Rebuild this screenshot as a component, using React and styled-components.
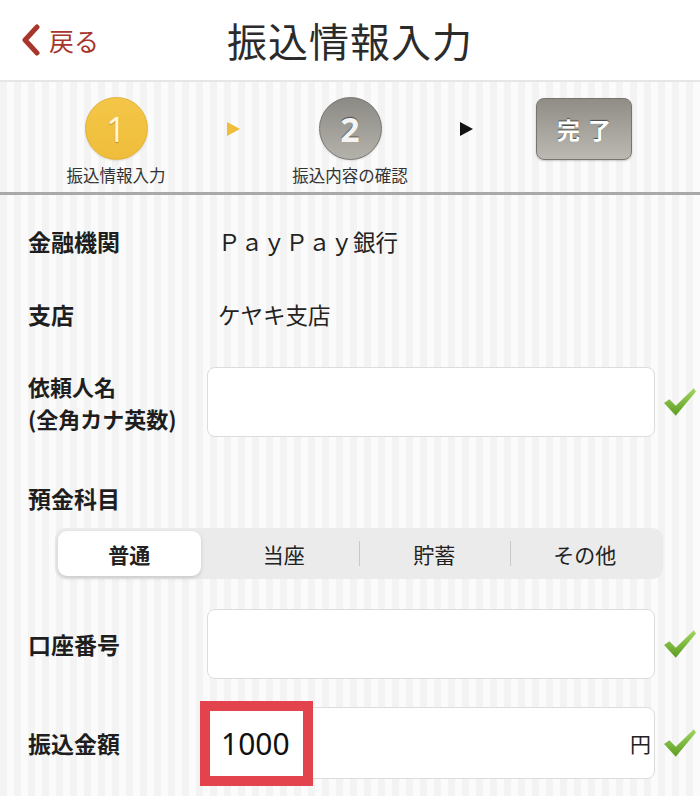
import React from "react";
import styled, { createGlobalStyle } from "styled-components";

const Global = createGlobalStyle`
  html, body { margin: 0; padding: 0; }
  body {
    width: 700px;
    font-family: "Noto Sans CJK JP", "Noto Sans", sans-serif;
    color: #222;
    background: repeating-linear-gradient(90deg, #f3f3f3 0px, #f3f3f3 7px, #fbfbfb 7px, #fbfbfb 14px);
  }
`;

const Page = styled.div`
  width: 700px;
  height: 796px;
  overflow: hidden;
  display: flex;
  flex-direction: column;
`;

const Header = styled.header`
  height: 80px;
  background: #fff;
  border-bottom: 2px solid #e6e6e6;
  display: grid;
  grid-template-columns: 1fr auto 1fr;
  align-items: center;
`;

const Back = styled.div`
  display: flex;
  align-items: center;
  gap: 8px;
  padding-left: 21px;
  color: #a8352b;
  font-size: 25px;
  line-height: 1;
`;

const Title = styled.h1`
  margin: 0;
  font-size: 40px;
  font-weight: 400;
  color: #2b2b2b;
  letter-spacing: 1px;
`;

const Stepper = styled.div`
  height: 95px;
  padding: 15px 0 0 36px;
  border-bottom: 3px solid #a9a9a9;
  display: grid;
  grid-template-columns: 160px 74px 160px 72px 164px;
  align-items: start;
`;

const Step = styled.div`
  display: flex;
  flex-direction: column;
  align-items: center;
`;

const Circle = styled.div`
  width: 63px;
  height: 63px;
  border-radius: 50%;
  box-sizing: border-box;
  display: flex;
  align-items: center;
  justify-content: center;
  font-family: "Noto Sans", sans-serif;
  font-size: 34px;
  font-weight: ${(p) => (p.$active ? 400 : 700)};
  color: ${(p) => (p.$active ? "#fff6dd" : "#f4f4f2")};
  background: ${(p) =>
    p.$active
      ? "linear-gradient(#f4c648, #efbd3a)"
      : "linear-gradient(#8c8a84, #b4b2ab)"};
  border: 1px solid ${(p) => (p.$active ? "#e2b237" : "#76746e")};
  text-shadow: ${(p) => (p.$active ? "0 1px 1px rgba(150,110,20,0.6)" : "0 -1px 1px rgba(0,0,0,0.5)")};
  box-shadow: 0 1px 2px rgba(0,0,0,0.12);
`;

const StepLabel = styled.div`
  margin-top: 5px;
  font-size: 16.5px;
  line-height: 20px;
  color: #333;
`;

const Arrow = styled.div`
  justify-self: center;
  margin-top: 25px;
  width: 0;
  height: 0;
  border-top: 7px solid transparent;
  border-bottom: 7px solid transparent;
  border-left: 13px solid ${(p) => p.$color};
`;

const DoneButton = styled.div`
  justify-self: center;
  width: 96px;
  height: 62px;
  margin-top: 1px;
  box-sizing: border-box;
  border-radius: 8px;
  border: 1px solid #77756e;
  background: linear-gradient(#8f8d85, #bbb9b2);
  box-shadow: 0 1px 2px rgba(0,0,0,0.2);
  display: flex;
  align-items: center;
  justify-content: center;
  color: #fff;
  font-size: 23px;
  font-weight: 700;
  letter-spacing: 8px;
  padding-left: 8px;
  text-shadow: 0 -1px 1px rgba(0,0,0,0.55);
`;

const Form = styled.div`
  padding: 7px 0 0 28px;
  display: flex;
  flex-direction: column;
`;

const Row = styled.div`
  display: grid;
  grid-template-columns: 179px 448px 45px;
  align-items: center;
  height: ${(p) => p.$h}px;
  margin-top: ${(p) => p.$mt || 0}px;
`;

const Label = styled.div`
  font-size: 23px;
  font-weight: 700;
  line-height: 30px;
  color: #1e1e1e;
`;

const LabelLine = styled.span`
  display: block;
  font-size: 22px;
  line-height: 32px;
  height: 32px;
`;

const Value = styled.div`
  padding-left: 11px;
  font-size: 22.5px;
  color: #222;
`;

const Field = styled.div`
  height: ${(p) => p.$h}px;
  box-sizing: border-box;
  background: #fff;
  border: 1px solid #dcdcdc;
  border-radius: 8px;
  display: flex;
  align-items: center;
  justify-content: space-between;
  position: relative;
  padding: 0 3px 0 13px;
`;

const Amount = styled.span`
  font-family: "Noto Sans", sans-serif;
  font-size: 30px;
  color: #111;
`;

const Yen = styled.span`
  font-size: 21px;
  color: #222;
`;

const Highlight = styled.div`
  position: absolute;
  left: -8px;
  top: -7px;
  width: 113px;
  height: 85px;
  box-sizing: border-box;
  border: 10px solid #e3434d;
`;

const CheckCell = styled.div`
  display: flex;
  align-items: center;
  padding-left: 8px;
`;

const SectionLabel = styled(Label)`
  margin-top: 46px;
`;

const Segmented = styled.div`
  margin: 15px 0 0 27px;
  width: 608px;
  height: 51px;
  box-sizing: border-box;
  padding: 3px;
  background: #ebebeb;
  border-radius: 11px;
  display: grid;
  grid-template-columns: repeat(4, 1fr);
  align-items: center;
`;

const Segment = styled.div`
  height: 45px;
  display: flex;
  align-items: center;
  justify-content: center;
  font-size: 21px;
  font-weight: ${(p) => (p.$active ? 700 : 400)};
  color: #222;
  border-radius: 9px;
  margin-right: ${(p) => (p.$active ? 8 : 0)}px;
  background: ${(p) => (p.$active ? "#fff" : "transparent")};
  box-shadow: ${(p) => (p.$active ? "0 2px 4px rgba(0,0,0,0.15)" : "none")};
  position: relative;
  ${(p) =>
    p.$divider
      ? `&::before { content: ""; position: absolute; left: 0; top: 10px; bottom: 10px; width: 1px; background: #c8c8c8; }`
      : ""}
`;

const Check = () => (
  <svg width="34" height="30" viewBox="0 0 32 28">
    <defs>
      <linearGradient id="cg" x1="0" y1="0" x2="0" y2="1">
        <stop offset="0" stopColor="#a3d660" />
        <stop offset="1" stopColor="#5c9c22" />
      </linearGradient>
    </defs>
    <path d="M1 15 L6 11.5 L12 17.5 L29 1 L31 4 L12 27 Z" fill="url(#cg)" />
  </svg>
);

const Chevron = () => (
  <svg width="20" height="32" viewBox="0 0 20 32">
    <polyline points="16,3 4,16 16,29" fill="none" stroke="#a8352b" strokeWidth="5" strokeLinecap="round" strokeLinejoin="round" />
  </svg>
);

export default function App() {
  return (
    <Page>
      <Global />
      <Header>
        <Back>
          <Chevron />
          <span>戻る</span>
        </Back>
        <Title>振込情報入力</Title>
        <div />
      </Header>
      <Stepper>
        <Step>
          <Circle $active>1</Circle>
          <StepLabel>振込情報入力</StepLabel>
        </Step>
        <Arrow $color="#efbd3a" />
        <Step>
          <Circle>2</Circle>
          <StepLabel>振込内容の確認</StepLabel>
        </Step>
        <Arrow $color="#111" />
        <DoneButton>完了</DoneButton>
      </Stepper>
      <Form>
        <Row $h={78}>
          <Label>金融機関</Label>
          <Value>ＰａｙＰａｙ銀行</Value>
        </Row>
        <Row $h={68}>
          <Label>支店</Label>
          <Value>ケヤキ支店</Value>
        </Row>
        <Row $h={70} $mt={19}>
          <Label>
            <LabelLine>依頼人名</LabelLine>
            <LabelLine>(全角カナ英数)</LabelLine>
          </Label>
          <Field $h={70} />
          <CheckCell>
            <Check />
          </CheckCell>
        </Row>
        <SectionLabel>預金科目</SectionLabel>
        <Segmented>
          <Segment $active>普通</Segment>
          <Segment>当座</Segment>
          <Segment $divider>貯蓄</Segment>
          <Segment $divider>その他</Segment>
        </Segmented>
        <Row $h={70} $mt={30}>
          <Label>口座番号</Label>
          <Field $h={70} />
          <CheckCell>
            <Check />
          </CheckCell>
        </Row>
        <Row $h={72} $mt={28}>
          <Label>振込金額</Label>
          <Field $h={72}>
            <Amount>1000</Amount>
            <Yen>円</Yen>
            <Highlight />
          </Field>
          <CheckCell>
            <Check />
          </CheckCell>
        </Row>
      </Form>
    </Page>
  );
}
